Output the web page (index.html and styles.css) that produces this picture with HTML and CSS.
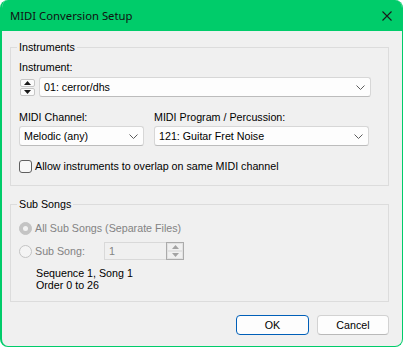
FILE: index.html
```html
<!DOCTYPE html>
<html lang="en">
<head>
    <meta charset="UTF-8">
    <meta name="viewport" content="width=device-width, initial-scale=1.0">
    <title>MIDI Conversion Setup</title>
    <link rel="stylesheet" href="styles.css">
</head>
<body>
    <div class="window">
        <div class="titlebar">
            <span class="title">MIDI Conversion Setup</span>
            <svg class="close" width="10" height="10" viewBox="0 0 10 10">
                <path d="M0.5 0.5L9.5 9.5M9.5 0.5L0.5 9.5" stroke="#1a1a1a" stroke-width="1.1" fill="none"/>
            </svg>
        </div>
        <div class="client">
            <fieldset class="group group-instruments">
                <legend>Instruments</legend>
                <div class="field-label">Instrument:</div>
                <div class="instrument-row">
                    <div class="spin">
                        <div class="spin-btn">
                            <svg width="7" height="4" viewBox="0 0 7 4"><path d="M3.5 0L7 4H0Z" fill="#1a1a1a"/></svg>
                        </div>
                        <div class="spin-btn">
                            <svg width="7" height="4" viewBox="0 0 7 4"><path d="M0 0H7L3.5 4Z" fill="#1a1a1a"/></svg>
                        </div>
                    </div>
                    <div class="combo combo-wide">
                        <span>01: cerror/dhs</span>
                        <svg width="9" height="5" viewBox="0 0 9 5"><path d="M0.5 0.5L4.5 4.5L8.5 0.5" fill="none" stroke="#5c5c5c"/></svg>
                    </div>
                </div>
                <div class="channel-row">
                    <div class="col col-channel">
                        <div class="field-label">MIDI Channel:</div>
                        <div class="combo">
                            <span>Melodic (any)</span>
                            <svg width="9" height="5" viewBox="0 0 9 5"><path d="M0.5 0.5L4.5 4.5L8.5 0.5" fill="none" stroke="#5c5c5c"/></svg>
                        </div>
                    </div>
                    <div class="col col-program">
                        <div class="field-label">MIDI Program / Percussion:</div>
                        <div class="combo">
                            <span>121: Guitar Fret Noise</span>
                            <svg width="9" height="5" viewBox="0 0 9 5"><path d="M0.5 0.5L4.5 4.5L8.5 0.5" fill="none" stroke="#5c5c5c"/></svg>
                        </div>
                    </div>
                </div>
                <div class="check-row">
                    <span class="checkbox"></span>
                    <span>Allow instruments to overlap on same MIDI channel</span>
                </div>
            </fieldset>

            <fieldset class="group group-subsongs">
                <legend>Sub Songs</legend>
                <div class="radio-row">
                    <span class="radio checked"></span>
                    <span class="disabled-text">All Sub Songs (Separate Files)</span>
                </div>
                <div class="radio-row radio-row-spin">
                    <span class="radio"></span>
                    <span class="disabled-text sub-song-label">Sub Song:</span>
                    <div class="spin-edit">
                        <span class="spin-value">1</span>
                        <div class="spin-side">
                            <div class="spin-half">
                                <svg width="7" height="4" viewBox="0 0 7 4"><path d="M3.5 0L7 4H0Z" fill="#a3a3a3"/></svg>
                            </div>
                            <div class="spin-half">
                                <svg width="7" height="4" viewBox="0 0 7 4"><path d="M0 0H7L3.5 4Z" fill="#a3a3a3"/></svg>
                            </div>
                        </div>
                    </div>
                </div>
                <div class="info">
                    Sequence 1, Song 1<br>
                    Order 0 to 26
                </div>
            </fieldset>

            <div class="buttons">
                <button class="btn btn-default">OK</button>
                <button class="btn">Cancel</button>
            </div>
        </div>
    </div>
</body>
</html>
```

FILE: styles.css
```css
* {
    box-sizing: border-box;
}
body {
    margin: 0;
    background-color: #ffffff;
    font-family: "Liberation Sans", Arial, sans-serif;
    font-size: 10.7px;
    line-height: 13px;
    color: #000000;
}
.window {
    width: 403px;
    height: 347px;
    border: 1px solid #00cc6a;
    border-left-width: 2px;
    border-top: none;
    border-radius: 8px;
    background-color: #f0f0f0;
    display: flex;
    flex-direction: column;
    overflow: hidden;
}
.titlebar {
    height: 31px;
    flex-shrink: 0;
    background-color: #00cc6a;
    display: flex;
    align-items: center;
    justify-content: space-between;
    padding: 0 10px 0 8px;
}
.title {
    font-family: "Noto Sans", sans-serif;
    font-size: 11.3px;
    color: #111111;
}
.client {
    flex: 1;
    padding: 10px 13px 0 8px;
    display: flex;
    flex-direction: column;
}
.group {
    margin: 0;
    border: 1px solid #dcdcdc;
    min-width: 0;
}
.group legend {
    padding: 0 2px;
    margin-left: -2px;
    line-height: 13px;
}
.group-instruments {
    padding: 7px 17px 12px 8px;
}
.group-subsongs {
    margin-top: 12px;
    padding: 11px 8px 10px 8px;
}

/* instruments */
.instrument-row {
    display: flex;
    align-items: center;
    gap: 4px;
    margin-top: 3px;
}
.spin {
    display: flex;
    flex-direction: column;
    gap: 1px;
    margin-left: 1px;
}
.spin-btn {
    width: 15px;
    height: 8px;
    border: 1px solid #c6c6c6;
    border-radius: 2px;
    background-color: #fbfbfb;
    display: flex;
    align-items: center;
    justify-content: center;
}
.combo {
    height: 20px;
    display: flex;
    align-items: center;
    justify-content: space-between;
    padding: 0 5px 0 4px;
    background-color: #fdfdfd;
    border: 1px solid #d7d7d7;
    border-bottom-color: #bcbcbc;
    border-radius: 3px;
}
.combo-wide {
    flex: 1;
}
.channel-row {
    display: flex;
    gap: 10px;
    margin-top: 14px;
}
.col .combo {
    margin-top: 2px;
}
.col-channel {
    width: 125px;
}
.col-program {
    width: 215px;
}
.check-row {
    display: flex;
    align-items: center;
    gap: 3px;
    margin-top: 14px;
    height: 13px;
}
.checkbox {
    width: 13px;
    height: 13px;
    border: 1px solid #5f5f5f;
    border-radius: 3px;
    background-color: #f7f7f7;
}

/* sub songs */
.radio-row {
    display: flex;
    align-items: center;
    gap: 3px;
    height: 13px;
}
.radio-row-spin {
    height: 18px;
    margin-top: 7px;
}
.disabled-text {
    color: #838383;
}
.radio {
    width: 13px;
    height: 13px;
    border-radius: 50%;
    border: 1px solid #c4c4c4;
    background-color: #f4f4f4;
    display: flex;
    align-items: center;
    justify-content: center;
}
.radio.checked {
    border-color: #c4c4c4;
    background-color: #c4c4c4;
}
.radio.checked::after {
    content: "";
    width: 5px;
    height: 5px;
    border-radius: 50%;
    background-color: #f2f2f2;
}
.sub-song-label {
    width: 66px;
}
.spin-edit {
    width: 80px;
    height: 18px;
    display: flex;
    justify-content: space-between;
    border: 1px solid #d9d9d9;
    background-color: #f0f0f0;
}
.spin-value {
    color: #838383;
    padding-left: 4px;
    line-height: 16px;
}
.spin-side {
    width: 18px;
    margin: -1px -1px -1px 0;
    border: 1px solid #ababab;
    display: flex;
    flex-direction: column;
}
.spin-half {
    flex: 1;
    display: flex;
    align-items: center;
    justify-content: center;
    border: 1px solid #e2e2e2;
}
.info {
    margin-top: 7px;
    padding-left: 17px;
    line-height: 12px;
}

/* buttons */
.buttons {
    display: flex;
    justify-content: flex-end;
    gap: 8px;
    margin-top: 13px;
}
.btn {
    width: 73px;
    height: 20px;
    padding: 0;
    font-family: "Liberation Sans", Arial, sans-serif;
    font-size: 10.7px;
    color: #000000;
    background-color: #fdfdfd;
    border: 1px solid #d2d2d2;
    border-bottom-color: #b9b9b9;
    border-radius: 4px;
}
.btn:last-child {
    width: 72px;
}
.btn-default {
    border: 1px solid #005fb8;
}
```
